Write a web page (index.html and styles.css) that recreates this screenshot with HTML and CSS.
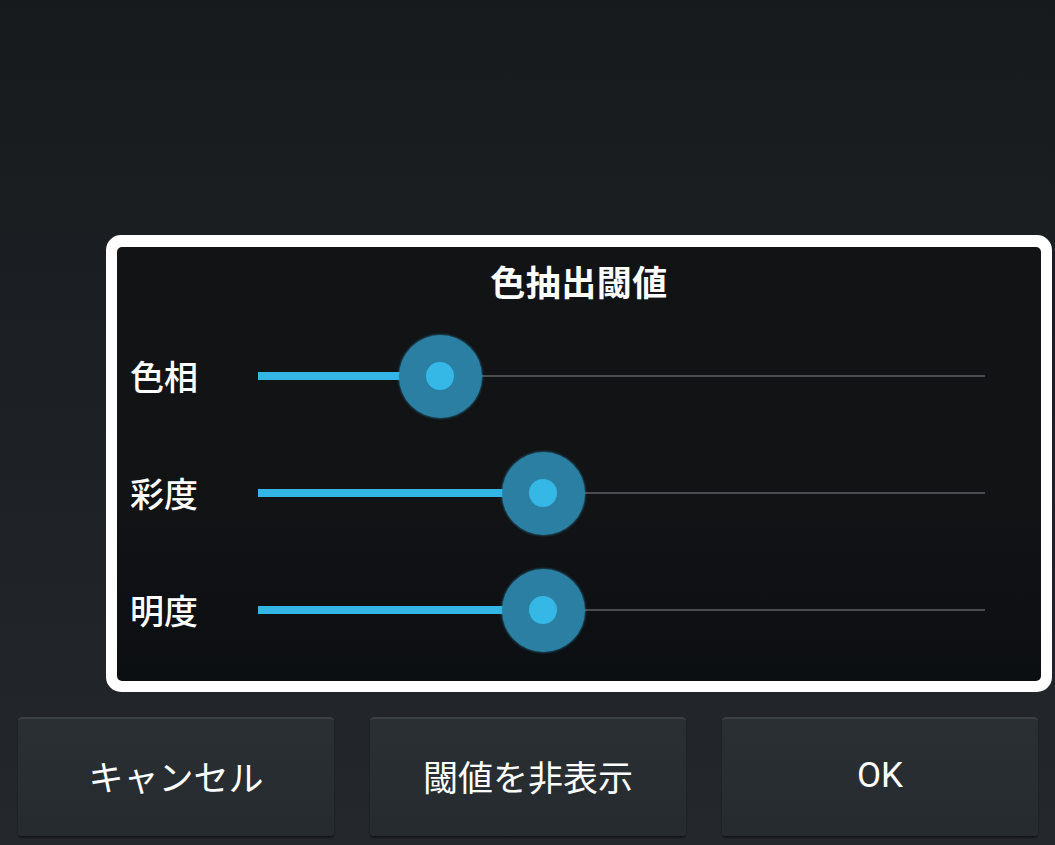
FILE: index.html
```html
<!DOCTYPE html>
<html lang="ja">
<head>
<meta charset="utf-8">
<title>色抽出閾値</title>
<link rel="stylesheet" href="styles.css">
</head>
<body>
<div class="screen">
  <div class="spacer"></div>
  <div class="dialog">
    <div class="dialog-inner">
      <div class="title">色抽出閾値</div>
      <div class="row">
        <div class="label">色相</div>
        <div class="slider">
          <div class="track"></div>
          <div class="fill" style="width: 25%"></div>
          <div class="thumb" style="left: 25%"><span class="dot"></span></div>
        </div>
      </div>
      <div class="row">
        <div class="label">彩度</div>
        <div class="slider">
          <div class="track"></div>
          <div class="fill" style="width: 39.2%"></div>
          <div class="thumb" style="left: 39.2%"><span class="dot"></span></div>
        </div>
      </div>
      <div class="row">
        <div class="label">明度</div>
        <div class="slider">
          <div class="track"></div>
          <div class="fill" style="width: 39.2%"></div>
          <div class="thumb" style="left: 39.2%"><span class="dot"></span></div>
        </div>
      </div>
    </div>
  </div>
  <div class="buttons">
    <button class="btn">キャンセル</button>
    <button class="btn">閾値を非表示</button>
    <button class="btn btn-ok">OK</button>
  </div>
</div>
</body>
</html>
```
FILE: styles.css
```css
html, body {
  margin: 0;
  padding: 0;
}
body {
  width: 1055px;
  height: 845px;
  overflow: hidden;
  background: linear-gradient(180deg, #171a1d 0%, #1c2024 45%, #24282d 100%);
  font-family: "Noto Sans CJK JP", "Noto Sans", sans-serif;
  color: #ffffff;
}
.screen {
  display: flex;
  flex-direction: column;
  height: 845px;
}
.spacer {
  height: 235px;
  flex: none;
}
.dialog {
  margin-left: 106px;
  width: 946px;
  height: 457px;
  box-sizing: border-box;
  border: 11px solid #ffffff;
  border-top-width: 12px;
  border-radius: 15px;
  background: #ffffff;
}
.dialog-inner {
  height: 100%;
  box-sizing: border-box;
  border-radius: 5px;
  background: linear-gradient(180deg, #121315 0%, #111315 60%, #0c0f12 100%);
  padding: 12px 0 12px 13px;
  display: flex;
  flex-direction: column;
}
.title {
  text-align: center;
  font-size: 35px;
  font-weight: 700;
  line-height: 44px;
  height: 58px;
  padding-right: 13px;
  letter-spacing: 0.5px;
}
.row {
  height: 117px;
  display: flex;
  align-items: center;
}
.label {
  width: 128px;
  flex: none;
  font-size: 34px;
  font-weight: 500;
  line-height: 40px;
}
.slider {
  position: relative;
  width: 727px;
  height: 90px;
  flex: none;
}
.track {
  position: absolute;
  left: 0;
  right: 0;
  top: 44px;
  height: 2px;
  background: #4a4c4f;
}
.fill {
  position: absolute;
  left: 0;
  top: 41px;
  height: 8px;
  background: #33b5e5;
}
.thumb {
  position: absolute;
  top: 4px;
  width: 83px;
  height: 83px;
  margin-left: -41px;
  border-radius: 50%;
  background: #2b7fa2;
  box-shadow: 0 0 2px 1px rgba(51, 181, 229, 0.35);
  display: flex;
  align-items: center;
  justify-content: center;
}
.dot {
  width: 28px;
  height: 28px;
  border-radius: 50%;
  background: #36b8e6;
}
.buttons {
  margin-top: 25px;
  padding: 0 18px;
  display: flex;
  gap: 36px;
}
.btn {
  width: 316px;
  height: 119px;
  flex: none;
  box-sizing: border-box;
  border: none;
  border-top: 2px solid #3b4045;
  border-radius: 4px;
  background: linear-gradient(180deg, #2a2f34 0%, #262b30 100%);
  box-shadow: 0 2px 2px rgba(0, 0, 0, 0.45);
  color: #ffffff;
  font-family: "Noto Sans CJK JP", "Noto Sans", sans-serif;
  font-size: 35px;
  font-weight: 400;
  line-height: 40px;
  padding: 0 0 4px;
}
.btn-ok {
  font-family: Roboto, "Noto Sans", sans-serif;
  font-size: 35px;
}
```
